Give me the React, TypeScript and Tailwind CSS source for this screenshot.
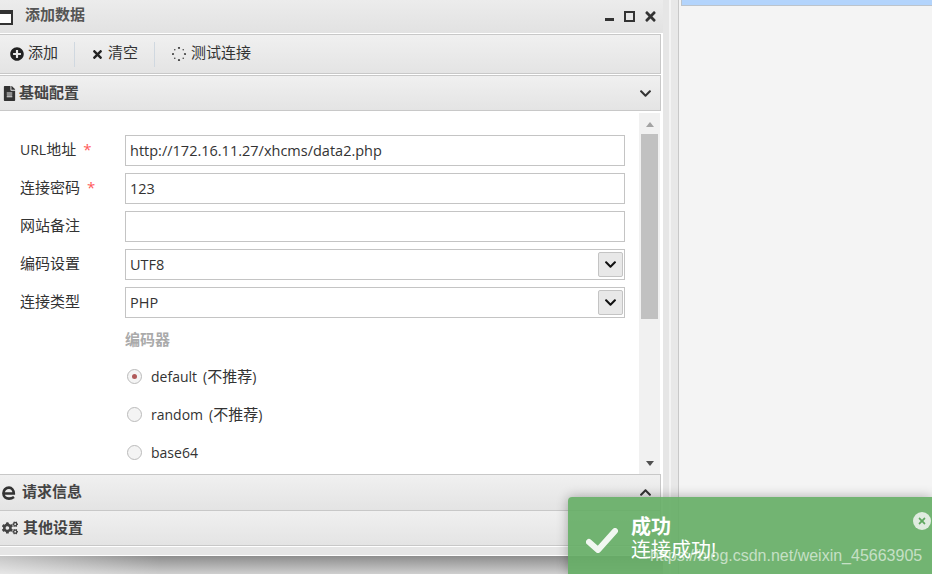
import { FaPlusCircle, FaTimes, FaFileAlt, FaCogs, FaChevronDown, FaChevronUp } from 'react-icons/fa'

const FONT = 'font-["Open_Sans","Noto_Sans_CJK_SC",sans-serif]'

function Spinner() {
  const dots = [0, 45, 90, 135, 180, 225, 270, 315]
  return (
    <svg width="14" height="14" viewBox="0 0 14 14" className="text-[#444]">
      {dots.map((a, i) => (
        <circle
          key={a}
          cx={7 + 6 * Math.cos((a * Math.PI) / 180)}
          cy={7 + 6 * Math.sin((a * Math.PI) / 180)}
          r={i % 2 ? 0.8 : 1.1}
          fill="currentColor"
        />
      ))}
    </svg>
  )
}

function EdgeIcon() {
  return (
    <svg width="14" height="14" viewBox="0 0 14 14" fill="none" stroke="#333" strokeWidth="2.6">
      <path d="M2.5 7.5 H11.8 C11.8 4 9.6 1.6 7 1.6 C3.8 1.6 1.4 4.2 1.4 7.2 C1.4 10.6 3.8 12.6 7 12.6 C9 12.6 10.6 12 12 11" />
    </svg>
  )
}

function AccordionHeader({ icon, title, chevron, className, iconClass }: { icon: React.ReactNode; title: string; chevron: React.ReactNode; className: string; iconClass: string }) {
  return (
    <div className={`flex w-[661px] shrink-0 items-center border border-l-0 border-[#c8c8c8] bg-gradient-to-b from-[#f0f0f0] to-[#e4e4e4] ${className}`}>
      <span className={`flex shrink-0 pl-[2px] text-[#333] ${iconClass}`}>{icon}</span>
      <span className="pb-[2px] text-[15px] font-bold text-[#444]">{title}</span>
      <span className="ml-auto mr-[8px] text-[#333]">{chevron}</span>
    </div>
  )
}

function Field({ label, value, required, select }: { label: React.ReactNode; value: string; required?: boolean; select?: boolean }) {
  return (
    <div className="flex h-[31px] items-center">
      <label className="mb-[3px] w-[125px] pl-[20px] text-[15px] text-[#333]">
        {label}
        {required && <span className="ml-[7px] text-[#ff5a5a]">*</span>}
      </label>
      <div className="flex h-full w-[500px] items-center justify-between border border-[#c4c4c4] bg-white pl-[4px] pr-[1px] text-[14.5px] text-[#333]">
        <span>{value}</span>
        {select && (
          <span className="flex h-[25px] w-[25px] items-center justify-center rounded-[2px] border border-[#c4c4c4] bg-[#e8e8e8] text-[#111]">
            <FaChevronDown size={13} />
          </span>
        )}
      </div>
    </div>
  )
}

function Radio({ label, note, checked }: { label: string; note?: string; checked?: boolean }) {
  return (
    <div className="flex h-[38px] items-center pl-[127px] text-[14px] text-[#333]">
      <span className="flex h-[15px] w-[15px] items-center justify-center rounded-full border border-[#bbb] bg-[#f4f4f4]">
        {checked && <span className="h-[5px] w-[5px] rounded-full bg-[#b05a5a]" />}
      </span>
      <span className="ml-[9px]">
        {label}
        {note && <span className="ml-[6px]">(<span className="text-[15px]">{note}</span>)</span>}
      </span>
    </div>
  )
}

export default function App() {
  return (
    <div className={`relative flex h-[574px] w-[932px] overflow-hidden bg-[#f4f4f4] ${FONT}`}>
      {/* left window */}
      <div className="flex h-full w-[663px] shrink-0 flex-col bg-white">
        <div className="flex h-[33px] shrink-0 items-center bg-gradient-to-b from-[#ececec] to-[#e2e2e2] pr-[5px]">
          <span className="ml-[-2px] mt-[2px] h-[15px] w-[15px] border-2 border-t-[4px] border-[#333] bg-white" />
          <span className="ml-[12px] pb-[4px] text-[15px] font-bold text-[#555]">添加数据</span>
          <span className="ml-auto mt-[6px] h-[3px] w-[9px] bg-[#333]" />
          <span className="ml-[10px] h-[11px] w-[11px] border-2 border-[#333]" />
          <FaTimes size={15} className="ml-[8px] text-[#333]" />
        </div>
        <div className="mt-[1px] flex h-[40px] w-[661px] shrink-0 items-center border border-l-0 border-[#c8c8c8] bg-gradient-to-b from-[#f0f0f0] to-[#e4e4e4] text-[15px] text-[#333]">
          <FaPlusCircle size={14} className="ml-[10px] text-[#222]" />
          <span className="ml-[4px] pb-[3px]">添加</span>
          <span className="ml-[16px] h-[25px] w-px bg-[#d0d8e0]" />
          <FaTimes size={13} className="ml-[16px] text-[#222]" />
          <span className="ml-[4px] pb-[3px]">清空</span>
          <span className="ml-[16px] h-[25px] w-px bg-[#d0d8e0]" />
          <span className="ml-[17px] pb-[1px]"><Spinner /></span>
          <span className="ml-[5px] pb-[3px]">测试连接</span>
        </div>
        <AccordionHeader
          icon={<FaFileAlt size={15} />}
          iconClass="w-[19px]"
          title="基础配置"
          chevron={<FaChevronDown size={13} />}
          className="mt-[1px] h-[36px]"
        />
        <div className="flex h-[363px] w-[661px] shrink-0">
          <div className="flex w-[639px] flex-col overflow-hidden pt-[24px]">
            <div className="flex flex-col gap-[7px]">
              <Field label={<><span className="text-[14px]">URL</span>地址</>} value="http://172.16.11.27/xhcms/data2.php" required />
              <Field label="连接密码" value="123" required />
              <Field label="网站备注" value="" />
              <Field label="编码设置" value="UTF8" select />
              <Field label="连接类型" value="PHP" select />
            </div>
            <div className="mt-[10px] pl-[125px] text-[15px] font-bold text-[#aaa]">编码器</div>
            <div className="mt-[7px]">
              <Radio label="default" note="不推荐" checked />
              <Radio label="random" note="不推荐" />
              <Radio label="base64" />
            </div>
          </div>
          <div className="mt-[2px] flex w-[21px] flex-col items-center bg-[#f1f1f1] pt-[9px]">
            <span className="h-0 w-0 border-x-[4px] border-b-[5px] border-x-transparent border-b-[#a3a3a3]" />
            <span className="mt-[7px] h-[185px] w-[17px] bg-[#c1c1c1]" />
            <span className="mb-[8px] mt-auto h-0 w-0 border-x-[4px] border-t-[5px] border-x-transparent border-t-[#505050]" />
          </div>
        </div>
        <AccordionHeader
          icon={<EdgeIcon />}
          iconClass="w-[22px]"
          title="请求信息"
          chevron={<FaChevronUp size={13} />}
          className="h-[37px]"
        />
        <AccordionHeader
          icon={<FaCogs size={16} className="text-[#444]" />}
          iconClass="w-[23px]"
          title="其他设置"
          chevron={null}
          className="h-[35px] border-t-0"
        />
        <div className="h-[10px] w-[661px] shrink-0 border-y border-white bg-[#e6e6e6]" />
        <div className="flex-1 bg-gradient-to-b from-[#8e8e8e] to-[#cfcfcf]">
          <div className="h-full w-[160px] bg-gradient-to-r from-white/50 to-transparent" />
        </div>
      </div>
      {/* splitter */}
      <div className="h-full w-[6px] shrink-0 bg-[#e6e6e6]" />
      <div className="h-full w-[2px] shrink-0 bg-[#f4f4f4]" />
      <div className="h-full w-[7px] shrink-0 bg-[#e8e8e8]" />
      <div className="h-full w-px shrink-0 bg-[#c8c8c8]" />
      {/* right panel */}
      <div className="flex-1 bg-[#f4f4f4] pl-[2px]">
        <div className="h-[6px] border-b border-l border-[#bcc4cc] bg-[#b3d4fc]" />
      </div>
      {/* toast */}
      <div className="absolute left-[568px] top-[497px] flex h-[77px] w-[364px] rounded-tl-[4px] bg-[#64ad64]/90 text-white shadow-[0_0_12px_rgba(0,0,0,0.3)]">
        <svg width="34" height="28" viewBox="0 0 34 28" fill="none" stroke="white" strokeWidth="6" strokeLinecap="round" strokeLinejoin="round" className="ml-[17px] mt-[29px] opacity-90">
          <path d="M4 16 L13 24 L30 5" />
        </svg>
        <div className="ml-[12px] mt-[17px]">
          <div className="text-[20px] font-bold leading-[26px]">成功</div>
          <div className="text-[20px] leading-[20px]">连接成功!</div>
        </div>
        <span className="absolute right-[1px] top-[15px] flex h-[18px] w-[18px] items-center justify-center rounded-full bg-[#e0ece0] text-[#5fa85f]">
          <FaTimes size={10} />
        </span>
      </div>
      {/* watermark */}
      <span className="absolute left-[650px] top-[544px] font-['Liberation_Sans',sans-serif] text-[16px] text-white/60">https://blog.csdn.net/weixin_45663905</span>
    </div>
  )
}
